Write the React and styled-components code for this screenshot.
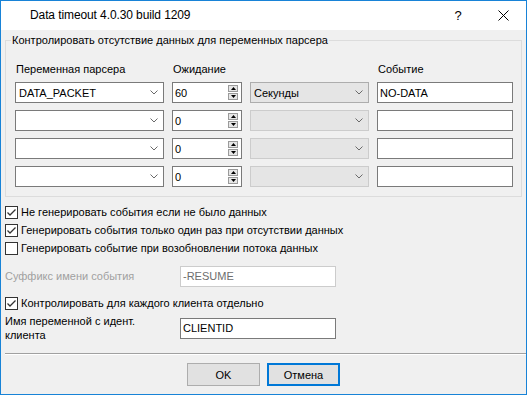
import React from "react";
import styled, { createGlobalStyle } from "styled-components";

const Global = createGlobalStyle`
  html, body { margin: 0; padding: 0; background: #f0f0f0; }
  body { font-family: "Liberation Sans", Arial, sans-serif; font-size: 11px; color: #000; }
  * { box-sizing: border-box; }
`;

const Window = styled.div`
  width: 527px;
  height: 395px;
  border: 1px solid #1883d7;
  background: #f0f0f0;
  display: flex;
  flex-direction: column;
  overflow: hidden;
`;

const TitleBar = styled.div`
  height: 29px;
  flex: none;
  background: #fff;
  display: flex;
  align-items: center;
  padding-left: 29px;
  padding-bottom: 1px;
`;

const Title = styled.div`
  font-size: 12px;
  flex: 1;
  letter-spacing: -0.1px;
`;

const TitleButton = styled.div`
  width: ${(p) => p.$w}px;
  height: 28px;
  display: flex;
  align-items: center;
  justify-content: center;
  font-size: 13px;
`;

const Body = styled.div`
  flex: 1;
  display: flex;
  flex-direction: column;
  padding: 10px 4px 0 4px;
`;

const GroupBox = styled.div`
  position: relative;
  height: 157px;
  border: 1px solid #dcdcdc;
  padding: 22px 0 0 9px;
`;

const Legend = styled.div`
  position: absolute;
  top: -8px;
  left: 5px;
  padding: 0 1px;
  background: #f0f0f0;
  line-height: 14px;
`;

const Grid = styled.div`
  display: grid;
  grid-template-columns: 149px 70px 119px 136px;
  column-gap: 8px;
  row-gap: 7px;
`;

const HeaderCell = styled.div`
  height: 13px;
  line-height: 13px;
  margin-bottom: -1px;
  padding-left: 1px;
`;

const Combo = styled.div`
  height: 21px;
  border: 1px solid ${(p) => (p.$disabled ? "#cccccc" : p.$flat ? "#adadad" : "#7a7a7a")};
  background: ${(p) => (p.$flat || p.$disabled ? "#e5e5e5" : "#fff")};
  display: flex;
  align-items: center;
  padding: 0 5px 0 3px;
`;

const ComboText = styled.div`
  flex: 1;
`;

const Chevron = () => (
  <svg width="8" height="5" viewBox="0 0 8 5">
    <path d="M0.5 0.5 L4 4 L7.5 0.5" fill="none" stroke="#6a6a6a" strokeWidth="1" />
  </svg>
);

const Edit = styled.div`
  height: 21px;
  border: 1px solid ${(p) => (p.$disabled ? "#cccccc" : "#7a7a7a")};
  background: #fff;
  color: ${(p) => (p.$disabled ? "#6d6d6d" : "#000")};
  display: flex;
  align-items: center;
  padding: 0 ${(p) => (p.$spin ? 3 : 2)}px 0 2px;
  width: ${(p) => (p.$w ? `${p.$w}px` : "auto")};
`;

const SpinButtons = styled.div`
  width: 10px;
  display: flex;
  flex-direction: column;
  gap: 1px;
`;

const SpinBtn = styled.div`
  height: 7px;
  border: 1px solid #9a9a9a;
  background: #e6e6e6;
  display: flex;
  align-items: center;
  justify-content: center;
`;

const Arrow = ({ up }) => (
  <svg width="5" height="3" viewBox="0 0 5 3">
    <path d={up ? "M0 3 L2.5 0 L5 3 Z" : "M0 0 L2.5 3 L5 0 Z"} fill="#000" />
  </svg>
);

const Checks = styled.div`
  display: flex;
  flex-direction: column;
  margin-top: ${(p) => p.$mt}px;
`;

const CheckRow = styled.div`
  height: 18px;
  display: flex;
  align-items: center;
  gap: 3px;
`;

const Box = styled.div`
  width: 13px;
  height: 13px;
  border: 1px solid #333;
  background: #fff;
  display: flex;
  align-items: center;
  justify-content: center;
`;

const Tick = () => (
  <svg width="11" height="11" viewBox="0 0 11 11">
    <path d="M1.5 5.5 L4 8 L9.5 2.5" fill="none" stroke="#333" strokeWidth="1.3" />
  </svg>
);

const FieldRow = styled.div`
  display: flex;
  align-items: center;
  height: ${(p) => p.$h}px;
  margin-top: ${(p) => p.$mt || 0}px;
`;

const FieldLabel = styled.div`
  width: 175px;
  line-height: 14px;
  color: ${(p) => (p.$disabled ? "#a0a0a0" : "#000")};
`;

const Separator = styled.div`
  margin: 11px -4px 0 0;
  height: 2px;
  border-top: 1px solid #a0a0a0;
  border-bottom: 1px solid #fff;
`;

const Buttons = styled.div`
  display: flex;
  gap: 7px;
  padding-left: 182px;
  margin-top: 8px;
`;

const Button = styled.div`
  width: 73px;
  height: 23px;
  background: #e1e1e1;
  border: ${(p) => (p.$default ? "2px solid #0078d7" : "1px solid #adadad")};
  display: flex;
  align-items: center;
  justify-content: center;
  font-weight: normal;
`;

const Check = ({ checked, children }) => (
  <CheckRow>
    <Box>{checked && <Tick />}</Box>
    <span>{children}</span>
  </CheckRow>
);

const rows = [
  { v: "DATA_PACKET", n: "60", u: "Секунды", e: "NO-DATA" },
  { v: "", n: "0", u: "", e: "" },
  { v: "", n: "0", u: "", e: "" },
  { v: "", n: "0", u: "", e: "" },
];

export default function App() {
  return (
    <>
      <Global />
      <Window>
        <TitleBar>
          <Title>Data timeout 4.0.30 build 1209</Title>
          <TitleButton $w={46}>?</TitleButton>
          <TitleButton $w={45}>
            <svg width="11" height="11" viewBox="0 0 11 11">
              <path d="M0.5 0.5 L10.5 10.5 M10.5 0.5 L0.5 10.5" stroke="#000" strokeWidth="1" />
            </svg>
          </TitleButton>
        </TitleBar>
        <Body>
          <GroupBox>
            <Legend>Контролировать отсутствие данных для переменных парсера</Legend>
            <Grid>
              <HeaderCell>Переменная парсера</HeaderCell>
              <HeaderCell>Ожидание</HeaderCell>
              <HeaderCell />
              <HeaderCell>Событие</HeaderCell>
              {rows.map((r, i) => (
                <React.Fragment key={i}>
                  <Combo>
                    <ComboText>{r.v}</ComboText>
                    <Chevron />
                  </Combo>
                  <Edit $spin>
                    <ComboText>{r.n}</ComboText>
                    <SpinButtons>
                      <SpinBtn><Arrow up /></SpinBtn>
                      <SpinBtn><Arrow /></SpinBtn>
                    </SpinButtons>
                  </Edit>
                  <Combo $flat={!!r.u} $disabled={!r.u}>
                    <ComboText>{r.u}</ComboText>
                    <Chevron />
                  </Combo>
                  <Edit>{r.e}</Edit>
                </React.Fragment>
              ))}
            </Grid>
          </GroupBox>
          <Checks $mt={6}>
            <Check checked>Не генерировать события если не было данных</Check>
            <Check checked>Генерировать события только один раз при отсутствии данных</Check>
            <Check>Генерировать событие при возобновлении потока данных</Check>
          </Checks>
          <FieldRow $h={22} $mt={8}>
            <FieldLabel $disabled>Суффикс имени события</FieldLabel>
            <Edit $disabled $w={156}>-RESUME</Edit>
          </FieldRow>
          <Checks $mt={7}>
            <Check checked>Контролировать для каждого клиента отдельно</Check>
          </Checks>
          <FieldRow $h={28} $mt={2}>
            <FieldLabel>Имя переменной с идент.<br />клиента</FieldLabel>
            <Edit $w={156}>CLIENTID</Edit>
          </FieldRow>
          <Separator />
          <Buttons>
            <Button>OK</Button>
            <Button $default>Отмена</Button>
          </Buttons>
        </Body>
      </Window>
    </>
  );
}
